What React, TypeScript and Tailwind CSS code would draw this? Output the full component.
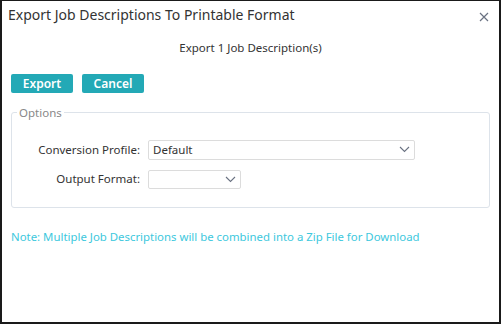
import React from "react";

function Chevron() {
  return (
    <svg width="11" height="7" viewBox="0 0 11 7" className="text-gray-500">
      <path d="M1 1l4.5 4.5L10 1" fill="none" stroke="currentColor" strokeWidth="1.1" />
    </svg>
  );
}

export default function App() {
  return (
    <div className="h-[324px] w-[501px] bg-white font-['Noto_Sans',sans-serif]">
      <div className="flex h-full flex-col border-x-2 border-b-2 border-t border-[#1a1a1a]">
        <div className="flex items-center justify-between pl-[6px] pr-[10px] pt-[3px]">
          <span className="text-[14px] text-[#333]">Export Job Descriptions To Printable Format</span>
          <svg width="10" height="10" viewBox="0 0 10 10" className="mt-[4px] text-gray-500">
            <path d="M1 1l8 8M9 1l-8 8" stroke="currentColor" strokeWidth="1.2" />
          </svg>
        </div>

        <div className="mt-[14px] text-center text-[11.5px] text-[#333]">Export 1 Job Description(s)</div>

        <div className="mt-[18px] flex gap-[9px] pl-[9px]">
          <button className="h-[19px] w-[62px] rounded-[2px] bg-[#23a9b6] text-[12px] font-semibold leading-[19px] text-white">
            Export
          </button>
          <button className="h-[19px] w-[62px] rounded-[2px] bg-[#23a9b6] text-[12px] font-semibold leading-[19px] text-white">
            Cancel
          </button>
        </div>

        <fieldset className="mx-[9px] mt-[11px] h-[104px] rounded-[3px] border border-[#dde3ea] px-[5px]">
          <legend className="px-[2px] text-[11.5px] text-[#888]">Options</legend>
          <div className="mt-[18px] grid grid-cols-[123px_auto] items-center gap-x-[8px] gap-y-[10px] text-[11.5px] text-[#333]">
            <label className="text-right">Conversion Profile:</label>
            <div className="flex h-[20px] w-[267px] items-center justify-between rounded-[2px] border border-[#dcdcdc] pl-[4px] pr-[4px]">
              <span>Default</span>
              <Chevron />
            </div>
            <label className="text-right">Output Format:</label>
            <div className="flex h-[19px] w-[93px] items-center justify-end rounded-[2px] border border-[#dcdcdc] pr-[4px]">
              <Chevron />
            </div>
          </div>
        </fieldset>

        <div className="mt-[20px] pl-[9px] text-[11.4px] text-[#3dc8dd]">
          Note: Multiple Job Descriptions will be combined into a Zip File for Download
        </div>
      </div>
    </div>
  );
}
